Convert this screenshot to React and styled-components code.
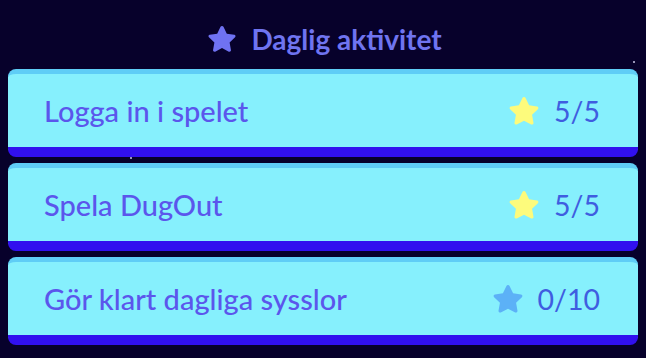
import React from "react";
import styled, { createGlobalStyle } from "styled-components";

const GlobalStyle = createGlobalStyle`
  html, body {
    margin: 0;
    padding: 0;
    background: #07012b;
  }
  body {
    font-family: Lato, "Noto Sans", sans-serif;
  }
`;

const tasks = [
  { title: "Logga in i spelet", done: 5, total: 5 },
  { title: "Spela DugOut", done: 5, total: 5 },
  { title: "Gör klart dagliga sysslor", done: 0, total: 10 },
];

const Star = ({ color, size }) => (
  <svg width={size} height={size} viewBox="0 0 24 24">
    <path
      d="M12 2.2c.5 0 .9.3 1.1.7l2.5 5.1 5.6.8c.9.1 1.3 1.3.6 1.9l-4.1 4 1 5.6c.2.9-.8 1.6-1.6 1.2L12 18.8l-5.1 2.7c-.8.4-1.8-.3-1.6-1.2l1-5.6-4.1-4c-.7-.6-.3-1.8.6-1.9l5.6-.8 2.5-5.1c.2-.4.6-.7 1.1-.7z"
      fill={color}
    />
  </svg>
);

export default function App() {
  return (
    <>
      <GlobalStyle />
      <Page>
        <Dot style={{ left: 633, top: 61 }} />
        <Dot style={{ left: 130, top: 157 }} />
        <Header>
          <Star color="#6f72f2" size={32} />
          <Title>Daglig aktivitet</Title>
        </Header>
        <List>
          {tasks.map((t) => (
            <Card key={t.title}>
              <TaskTitle>{t.title}</TaskTitle>
              <Progress>
                <Star
                  color={t.done >= t.total ? "#fdfb7c" : "#5cb1f7"}
                  size={34}
                />
                <Count>
                  {t.done}/{t.total}
                </Count>
              </Progress>
            </Card>
          ))}
        </List>
      </Page>
    </>
  );
}

const Page = styled.div`
  position: relative;
  width: 646px;
  height: 358px;
  overflow: hidden;
  background: #07012b;
  padding: 0 8px;
  box-sizing: border-box;
`;

const Dot = styled.span`
  position: absolute;
  width: 2px;
  height: 2px;
  background: #c9c6e6;
  border-radius: 1px;
`;

const Header = styled.div`
  height: 69px;
  display: flex;
  align-items: center;
  justify-content: center;
  gap: 13px;
  padding-left: 2px;
  box-sizing: border-box;
  padding-top: 8px;
`;

const Title = styled.h1`
  margin: 0;
  font-family: Lato, sans-serif;
  font-weight: 700;
  font-size: 28px;
  color: #6f74f0;
  letter-spacing: 0;
`;

const List = styled.div`
  display: flex;
  flex-direction: column;
  gap: 6px;
`;

const Card = styled.div`
  height: 88px;
  box-sizing: border-box;
  width: 630px;
  display: flex;
  align-items: center;
  justify-content: space-between;
  padding: 0 38px 0 36px;
  background: #86f0fd;
  border-top: 5px solid #5fcdf6;
  border-bottom: 10px solid #3110ef;
  border-radius: 8px;
`;

const TaskTitle = styled.span`
  font-family: Lato, sans-serif;
  font-weight: 500;
  font-size: 29px;
  color: #5b56ec;
`;

const Progress = styled.div`
  display: flex;
  align-items: center;
  gap: 13px;
`;

const Count = styled.span`
  font-family: Lato, sans-serif;
  font-weight: 400;
  font-size: 28.5px;
  color: #3f5de0;
`;
